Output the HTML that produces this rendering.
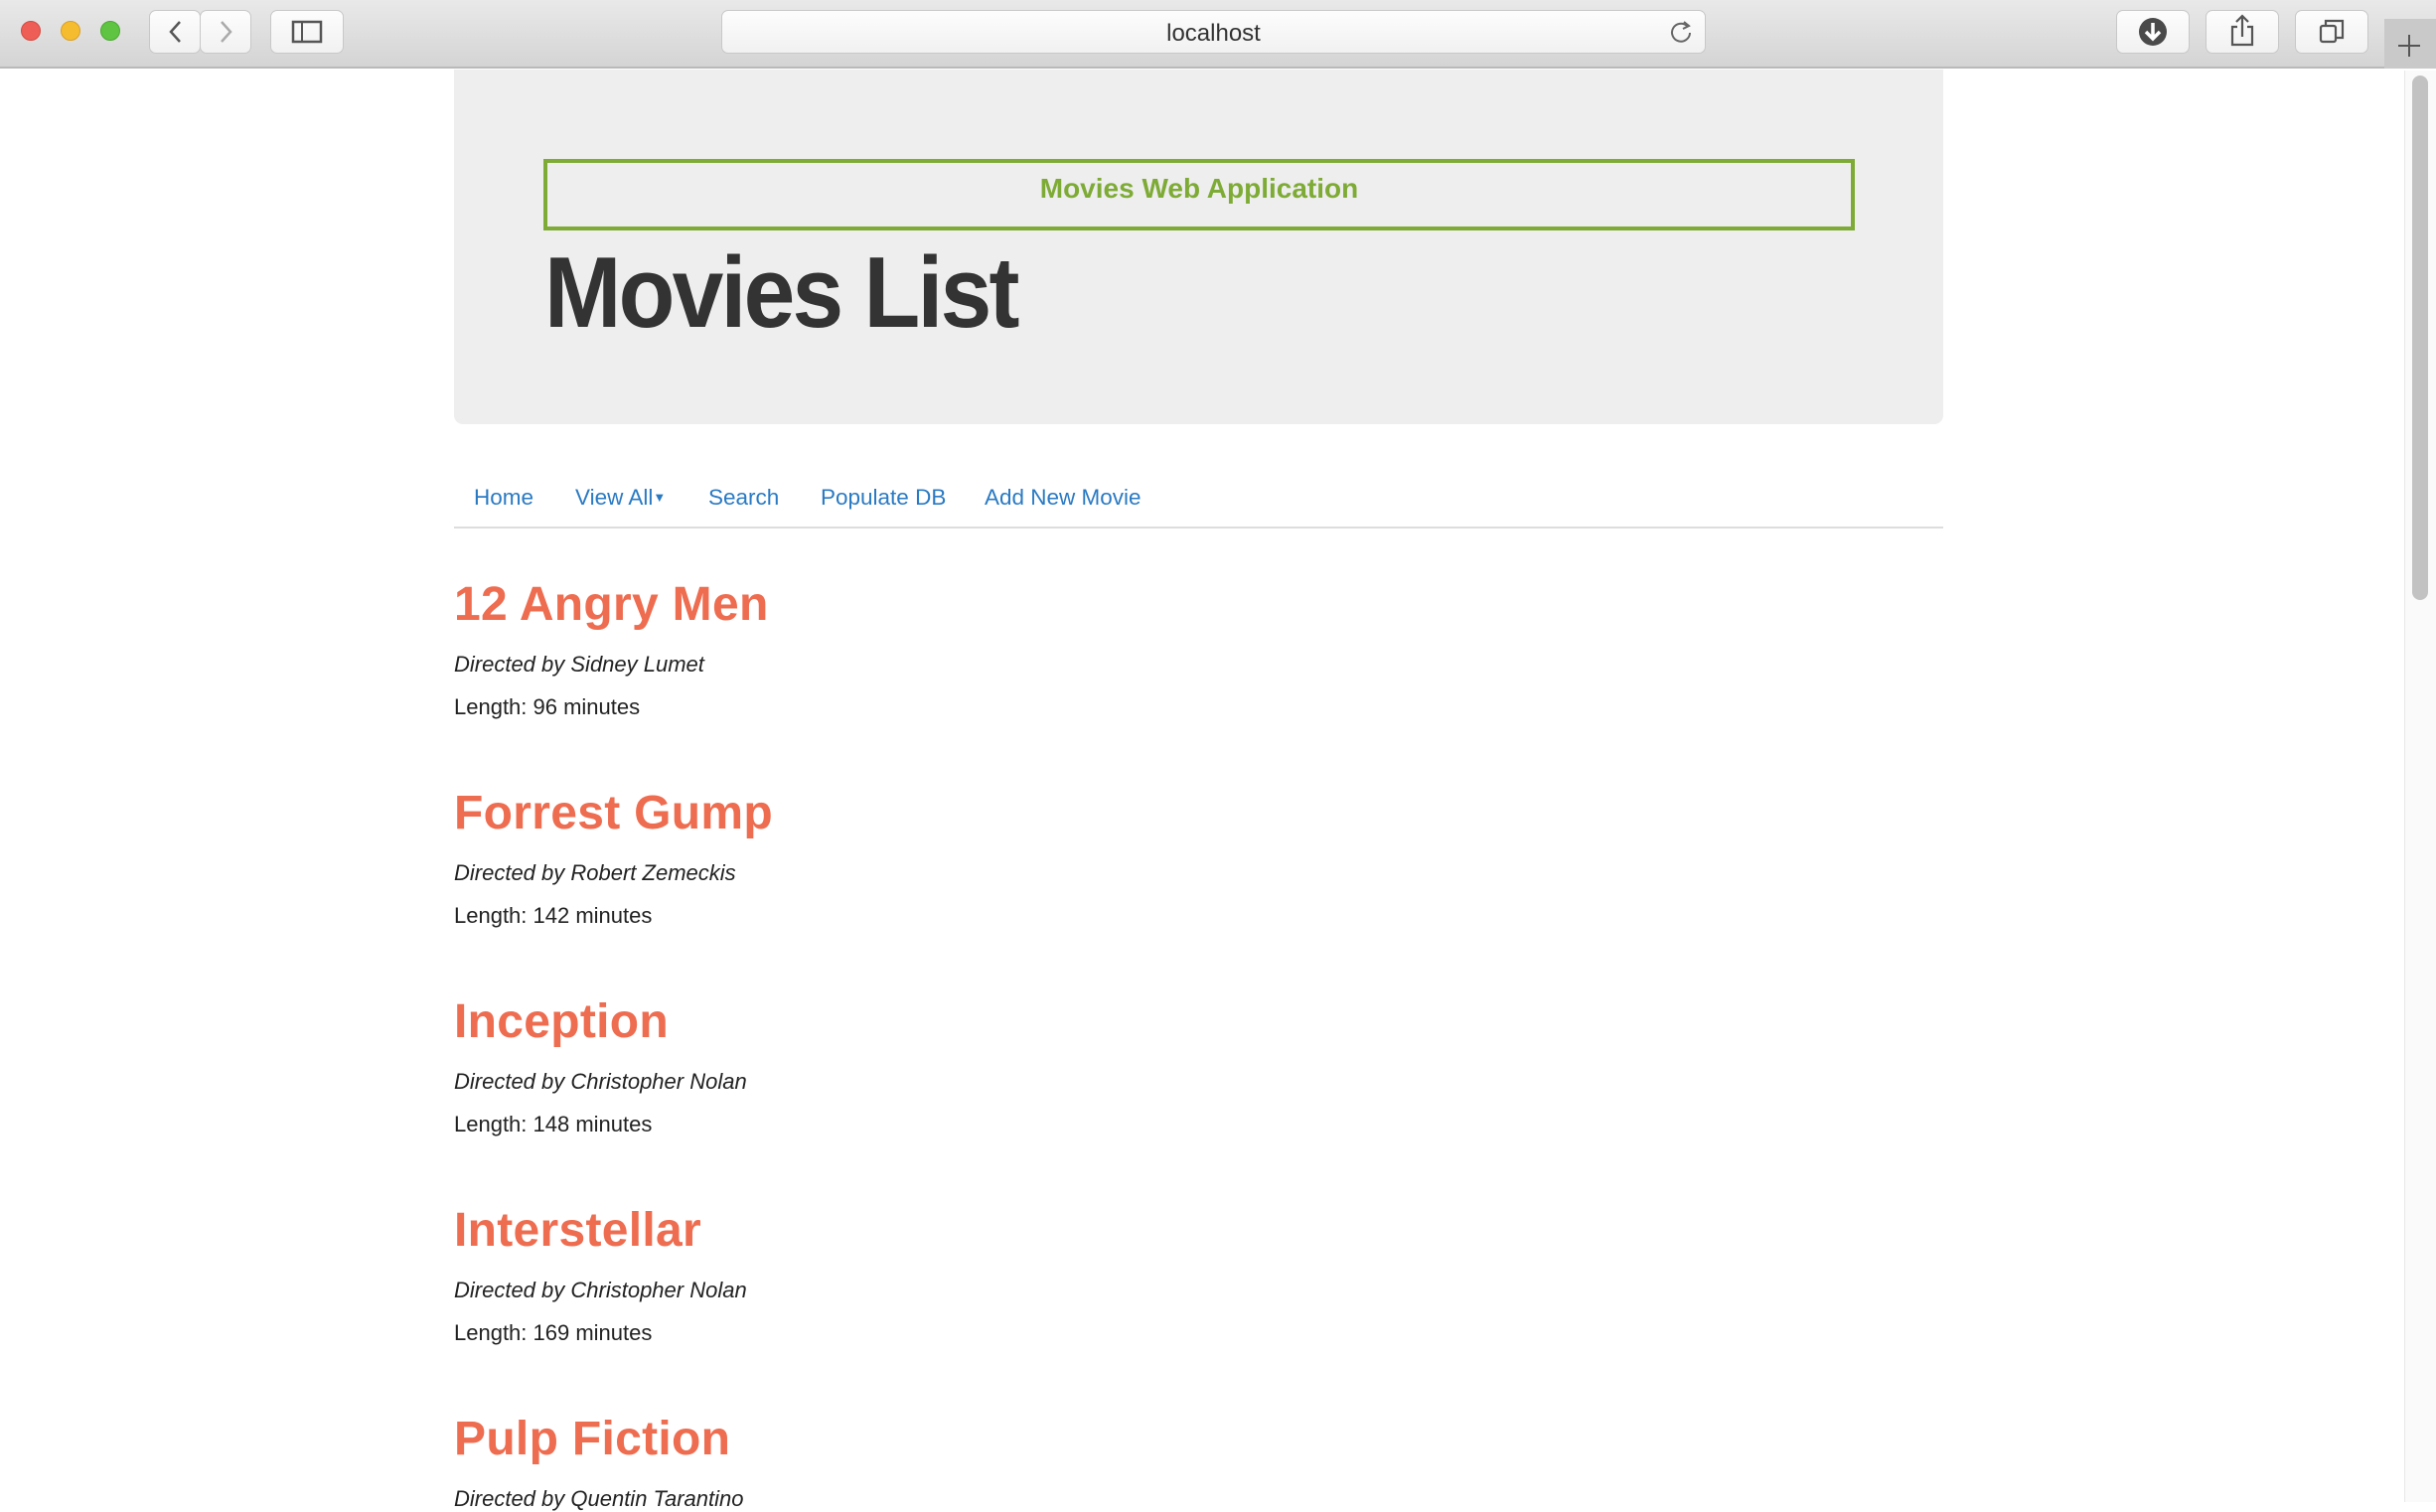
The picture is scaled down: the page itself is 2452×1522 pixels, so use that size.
<!DOCTYPE html>
<html><head><meta charset="utf-8"><style>
*{margin:0;padding:0;box-sizing:border-box}
body{width:2452px;height:1512px;overflow:hidden;background:#fff;font-family:"Liberation Sans",Arial,sans-serif;position:relative}
.a{position:absolute}
.tb{left:0;top:0;width:2452px;height:69px;background:linear-gradient(#e9e9e9,#d4d4d4);border-bottom:2px solid #b9b9b9}
.dot{width:20px;height:20px;border-radius:50%;top:21px}
.btn{top:10px;height:44px;background:linear-gradient(#fdfdfd,#f1f1f1);border:1px solid #c8c8c8;border-radius:7px}
.nav{top:488px;font-size:22.5px;color:#2a7ac3}
.t{left:457px;font-size:48px;font-weight:bold;color:#ee6c4f;letter-spacing:0.3px}
.d{left:457px;font-size:22px;font-style:italic;color:#222}
.l{left:457px;font-size:22px;color:#222}
</style></head><body>
<div class="a tb"></div>
<div class="a dot" style="left:21px;background:#ee5e56;border:1px solid #d44a42"></div>
<div class="a dot" style="left:61px;background:#f6bc30;border:1px solid #d9a024"></div>
<div class="a dot" style="left:101px;background:#5ec441;border:1px solid #4ba932"></div>
<div class="a btn" style="left:150px;width:52px"></div>
<div class="a btn" style="left:201px;width:52px"></div>
<svg class="a" style="left:150px;top:10px" width="104" height="44"><path d="M31 12 L22 22 L31 32" stroke="#555" stroke-width="2.5" fill="none"/><path d="M73 12 L82 22 L73 32" stroke="#aaa" stroke-width="2.5" fill="none"/></svg>
<div class="a btn" style="left:272px;width:74px"></div>
<svg class="a" style="left:272px;top:10px" width="74" height="44"><rect x="23" y="12" width="28" height="20" stroke="#555" stroke-width="2.5" fill="none"/><line x1="32" y1="12" x2="32" y2="32" stroke="#555" stroke-width="2"/></svg>
<div class="a btn" style="left:726px;width:991px"></div>
<div class="a" style="left:726px;width:991px;top:20px;text-align:center;font-size:24px;color:#333">localhost</div>
<svg class="a" style="left:1678px;top:18px" width="28" height="28"><path d="M20 8 A9 9 0 1 0 23 15" stroke="#666" stroke-width="2" fill="none"/><path d="M17 4 L22 8 L16 11" stroke="#666" stroke-width="2" fill="none"/></svg>
<div class="a btn" style="left:2130px;width:74px"></div>
<div class="a btn" style="left:2220px;width:74px"></div>
<div class="a btn" style="left:2310px;width:74px"></div>
<svg class="a" style="left:2130px;top:10px" width="74" height="44"><circle cx="37" cy="22" r="14" fill="#4a4a4a"/><path d="M37 13 V28 M30 22 L37 29 L44 22" stroke="#fff" stroke-width="3.5" fill="none"/></svg>
<svg class="a" style="left:2220px;top:10px" width="74" height="44"><path d="M32 17 H27 V35 H47 V17 H42" stroke="#555" stroke-width="2.2" fill="none"/><path d="M37 27 V6 M31 12 L37 6 L43 12" stroke="#555" stroke-width="2.2" fill="none"/></svg>
<svg class="a" style="left:2310px;top:10px" width="74" height="44"><rect x="26" y="16" width="15" height="16" rx="2" stroke="#555" stroke-width="2.2" fill="none"/><path d="M31 16 V11 H48 V28 H41" stroke="#555" stroke-width="2.2" fill="none"/></svg>
<div class="a" style="left:2400px;top:19px;width:52px;height:50px;background:#c9c9c9"></div>
<svg class="a" style="left:2400px;top:19px" width="52" height="50"><path d="M25 16 V38 M14 27 H36" stroke="#555" stroke-width="2"/></svg>
<div class="a" style="left:2420px;top:71px;width:32px;height:1441px;background:#fafafa;border-left:1px solid #e8e8e8"></div>
<div class="a" style="left:2428px;top:76px;width:16px;height:528px;background:#c2c2c2;border-radius:8px"></div>

<div class="a" style="left:457px;top:70px;width:1499px;height:357px;background:#eee;border-radius:0 0 9px 9px"></div>
<div class="a" style="left:547px;top:160px;width:1320px;height:72px;border:4px solid #7eab35"></div>
<div class="a" style="left:547px;top:174px;width:1320px;text-align:center;font-size:28px;font-weight:bold;color:#7eab35">Movies Web Application</div>
<div class="a" style="left:548px;top:238px;font-size:101px;font-weight:bold;color:#333;letter-spacing:-3px;transform:scaleX(0.92);transform-origin:left">Movies List</div>

<div class="a nav" style="left:477px">Home</div>
<div class="a nav" style="left:579px">View All<span style="font-size:13px;vertical-align:3px">▼</span></div>
<div class="a nav" style="left:713px">Search</div>
<div class="a nav" style="left:826px">Populate DB</div>
<div class="a nav" style="left:991px">Add New Movie</div>
<div class="a" style="left:457px;top:530px;width:1499px;height:2px;background:#ddd"></div>

<div class="a t" style="top:581px">12 Angry Men</div>
<div class="a d" style="top:656px">Directed by Sidney Lumet</div>
<div class="a l" style="top:699px">Length: 96 minutes</div>
<div class="a t" style="top:791px">Forrest Gump</div>
<div class="a d" style="top:866px">Directed by Robert Zemeckis</div>
<div class="a l" style="top:909px">Length: 142 minutes</div>
<div class="a t" style="top:1001px">Inception</div>
<div class="a d" style="top:1076px">Directed by Christopher Nolan</div>
<div class="a l" style="top:1119px">Length: 148 minutes</div>
<div class="a t" style="top:1211px">Interstellar</div>
<div class="a d" style="top:1286px">Directed by Christopher Nolan</div>
<div class="a l" style="top:1329px">Length: 169 minutes</div>
<div class="a t" style="top:1421px">Pulp Fiction</div>
<div class="a d" style="top:1496px">Directed by Quentin Tarantino</div>
</body></html>
